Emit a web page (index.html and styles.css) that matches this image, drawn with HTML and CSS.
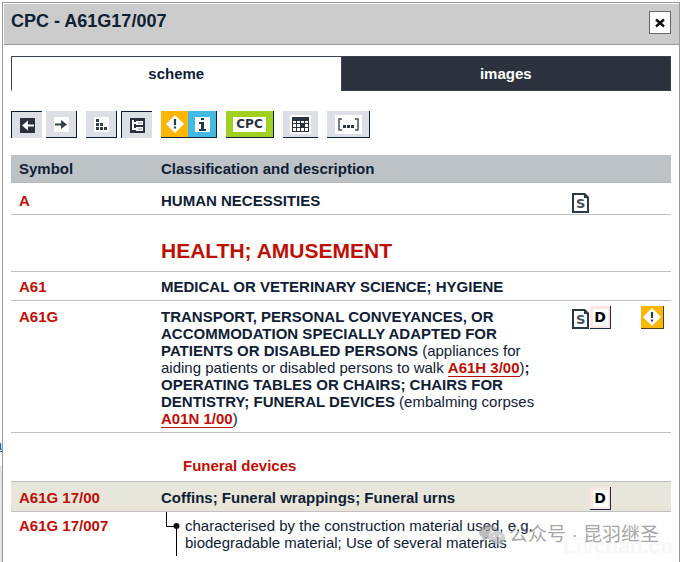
FILE: index.html
```html
<!DOCTYPE html>
<html lang="en">
<head>
    <meta charset="utf-8">
    <title>CPC - A61G17/007</title>
    <link rel="stylesheet" href="styles.css">
</head>
<body>
    <div class="behind"><a href="#">a</a></div>
    <div class="dialog">
        <div class="dialog-header">
            <h1>CPC - A61G17/007</h1>
            <button class="close" aria-label="Close">
                <svg width="10" height="10" viewBox="0 0 10 10"><path d="M1 1.500L9 8.500M9 1.500L1 8.500" stroke="#111" stroke-width="2.400"/></svg>
            </button>
        </div>
        <div class="dialog-body">
            <div class="tabs">
                <button class="tab active">scheme</button>
                <button class="tab">images</button>
            </div>

            <div class="toolbar">
                <div class="group">
                    <button class="tool pressed" aria-label="Back">
                        <svg width="15" height="15" viewBox="0 0 15 15"><rect width="15" height="15" fill="#2b323d"/><path d="M2 7.500L8 2.500V6.500H14V8.500H8V12.500Z" fill="#fff"/></svg>
                    </button>
                    <button class="tool" aria-label="Forward">
                        <svg width="15" height="15" viewBox="0 0 15 15"><rect width="15" height="15" fill="#fff"/><path d="M1 7.500H9" stroke="#2f4043" stroke-width="2"/><path d="M7 3L13 7.500L7 12Z" fill="#2f4043"/></svg>
                    </button>
                </div>
                <div class="group">
                    <button class="tool" aria-label="List">
                        <svg width="15" height="15" viewBox="0 0 15 15"><rect width="15" height="15" fill="#fff"/><path d="M2 2h3v3h-3zM2 6h3v3h-3zM6 6h3v3h-3zM2 10h3v3h-3zM6 10h3v3h-3zM10 10h3v3h-3z" fill="#333b44"/></svg>
                    </button>
                    <button class="tool pressed" aria-label="Tree">
                        <svg width="15" height="15" viewBox="0 0 15 15"><rect width="15" height="15" fill="#2b323d"/><path d="M3 2V11H7M3 5H7" fill="none" stroke="#fff" stroke-width="2"/><path d="M6 3h7v4h-7zM6 9h7v4h-7z" fill="#fff"/><path d="M8 5h4M8 11h4" stroke="#8b9098" stroke-width="1"/></svg>
                    </button>
                </div>
                <div class="group joined">
                    <button class="tool warning" aria-label="Warnings">
                        <svg width="18" height="18" viewBox="0 0 18 18"><path d="M9 0L18 9L9 18L0 9Z" fill="#fff"/><path d="M9 4v6M9 11.500v2" stroke="#2f3e46" stroke-width="2.200"/></svg>
                    </button>
                    <button class="tool info" aria-label="Notes">
                        <svg width="15" height="15" viewBox="0 0 15 15"><rect width="15" height="15" fill="#fff"/><path d="M6 1h3v2h-3zM4 5h5v7h2v2h-7v-2h2v-5h-2z" fill="#263746"/></svg>
                    </button>
                </div>
                <button class="tool cpc"><span>CPC</span></button>
                <button class="tool grid" aria-label="Table">
                    <svg width="21" height="19" viewBox="0 0 21 19"><rect width="21" height="19" fill="#fff"/><path d="M2 2h17v15h-17z" fill="#29323d"/><path d="M3 6h3v2h-3zM7 6h3v2h-3zM11 6h3v2h-3zM15 6h3v2h-3zM3 9h3v3h-3zM7 9h3v3h-3zM15 9h3v3h-3zM3 13h3v3h-3zM7 13h3v3h-3zM11 13h3v3h-3zM15 13h3v3h-3z" fill="#fff"/></svg>
                </button>
                <button class="tool refs" aria-label="References">
                    <svg width="27" height="19" viewBox="0 0 27 19"><rect width="27" height="19" fill="#fff"/><path d="M7 4H4V15H7M20 4H23V15H20" fill="none" stroke="#47505a" stroke-width="1.500"/><path d="M8 10h3v3h-3zM12 10h3v3h-3zM16 10h3v3h-3z" fill="#29323d"/></svg>
                </button>
            </div>

            <table class="scheme">
                <thead>
                    <tr>
                        <th class="symbol">Symbol</th>
                        <th>Classification and description</th>
                        <th class="docs"></th>
                        <th class="notes"></th>
                    </tr>
                </thead>
                <tbody>
                    <tr>
                        <td><a href="#">A</a></td>
                        <td class="title">HUMAN NECESSITIES</td>
                        <td><span class="icons">
                            <svg width="18" height="20" viewBox="0 0 18 20"><path d="M1 1H12L16 5V19H1Z" fill="#fff" stroke="#2b3a42" stroke-width="2"/><path d="M12 0H13L17 4V5H12Z" fill="#2b3a42"/><text x="4" y="15" class="glyph-s">S</text></svg>
                        </span></td>
                        <td></td>
                    </tr>
                    <tr class="section">
                        <td></td>
                        <td colspan="3">HEALTH; AMUSEMENT</td>
                    </tr>
                    <tr class="short">
                        <td><a href="#">A61</a></td>
                        <td class="title" colspan="3">MEDICAL OR VETERINARY SCIENCE; HYGIENE</td>
                    </tr>
                    <tr class="tall">
                        <td><a href="#">A61G</a></td>
                        <td><b>TRANSPORT, PERSONAL CONVEYANCES, OR ACCOMMODATION SPECIALLY ADAPTED FOR PATIENTS OR DISABLED PERSONS</b> (appliances for aiding patients or disabled persons to walk <a class="ref" href="#">A61H 3/00</a>)<b>; OPERATING TABLES OR CHAIRS; CHAIRS FOR DENTISTRY; FUNERAL DEVICES</b> (embalming corpses <a class="ref" href="#">A01N 1/00</a>)</td>
                        <td><span class="icons">
                            <svg width="18" height="20" viewBox="0 0 18 20"><path d="M1 1H12L16 5V19H1Z" fill="#fff" stroke="#2b3a42" stroke-width="2"/><path d="M12 0H13L17 4V5H12Z" fill="#2b3a42"/><text x="4" y="15" class="glyph-s">S</text></svg>
                            <button class="definition"><span>D</span></button>
                        </span></td>
                        <td>
                            <button class="alert" aria-label="Warning">
                                <svg width="18" height="18" viewBox="0 0 18 18"><path d="M9 0L18 9L9 18L0 9Z" fill="#fff"/><path d="M9 4v6M9 11.500v2" stroke="#2f3e46" stroke-width="2.200"/></svg>
                            </button>
                        </td>
                    </tr>
                    <tr class="heading">
                        <td></td>
                        <td colspan="3">Funeral devices</td>
                    </tr>
                    <tr class="selected">
                        <td><a href="#">A61G 17/00</a></td>
                        <td class="title">Coffins; Funeral wrappings; Funeral urns</td>
                        <td><span class="icons end"><button class="definition"><span>D</span></button></span></td>
                        <td></td>
                    </tr>
                    <tr class="leaf">
                        <td><a href="#">A61G 17/007</a></td>
                        <td>
                            <div class="branch">
                                <svg width="19" height="44" viewBox="0 0 19 44"><path d="M5.500 0V14.500H15M15.500 14V44" fill="none" stroke="#000"/><circle cx="15.500" cy="14" r="3" fill="#111"/></svg>
                                <p>characterised by the construction material used, e.g. biodegradable material; Use of several materials</p>
                            </div>
                        </td>
                        <td></td>
                        <td></td>
                    </tr>
                </tbody>
            </table>
        </div>
    </div>

    <div class="site-mark">Livchan.cn</div>
    <div class="account-mark">
        <svg width="26" height="22" viewBox="0 0 26 22"><path d="M9 1C4 1 0 4 0 8C0 10.500 1.500 12.500 4 14L3 17L7 15H10C9 9 13 6 18 6C17 3 13 1 9 1Z" fill="#999"/><path d="M18 7C13 7 10 10 10 13.500C10 17 13 20 18 20H20L24 22L23 19C25 17.500 26 15.500 26 13.500C26 10 23 7 18 7Z" fill="#b5b5b5"/><g fill="#fff"><circle cx="6" cy="6" r="1"/><circle cx="12" cy="6" r="1"/><circle cx="15" cy="12" r="1"/><circle cx="21" cy="12" r="1"/></g></svg>
        <span>公众号 · 昆羽继圣</span>
    </div>
</body>
</html>
```
FILE: styles.css
```css
* {
    box-sizing: border-box;
}

body {
    margin: 0;
    height: 100vh;
    overflow: hidden;
    position: relative;
    font-family: "Liberation Sans", Arial, "Noto Sans CJK SC", sans-serif;
    font-size: 15px;
    line-height: 17px;
    color: #0f2034;
    background: #fff;
}

button {
    font: inherit;
    color: inherit;
    padding: 0;
    margin: 0;
    border: none;
    border-radius: 0;
    cursor: pointer;
}

svg {
    display: block;
    flex: none;
}

/* strip of the page that shows beside the dialog */
.behind {
    position: absolute;
    left: 0;
    top: 0;
    bottom: 0;
    width: 2px;
    overflow: hidden;
    padding-top: 436px;
    display: flex;
    justify-content: flex-end;
    align-items: flex-start;
    background: linear-gradient(#fff 466px, #e4e4e4 466px);
}

.behind a {
    color: #0a4fa8;
    text-decoration: underline;
}

.dialog {
    margin: 2px 0 0 2px;
    min-height: 100vh;
    padding: 1px 0 0 1px;
    border: 1px solid #999;
    background: #fff;
}

.dialog-header {
    display: flex;
    justify-content: space-between;
    align-items: flex-start;
    height: 41px;
    padding: 7px 8px 0 7px;
    background: #ccc;
    border-bottom: 1px solid #999;
}

.dialog-header h1 {
    margin: 0;
    font-size: 18px;
    line-height: 20px;
}

.close {
    display: flex;
    align-items: center;
    justify-content: center;
    width: 22px;
    height: 23px;
    background: #fff;
    border: 1px solid #666;
}

.dialog-body {
    padding: 11px 8px 0 7px;
}

.tabs {
    display: flex;
    height: 35px;
    margin-bottom: 20px;
}

.tab {
    flex: 1;
    font-weight: bold;
    color: #fff;
    background: #2b323e;
    border: 1px solid #3a424d;
}

.tab.active {
    color: #0f2034;
    background: #fff;
    border-bottom-color: #fff;
    border-right: none;
}

.toolbar {
    display: flex;
    gap: 9px;
    height: 27px;
    margin-bottom: 17px;
}

.group {
    display: flex;
    gap: 4px;
}

.joined {
    gap: 0;
}

.tool {
    display: flex;
    align-items: center;
    justify-content: center;
    width: 31px;
    background: #dce0e6;
    border-right: 1px solid #0f2034;
    border-bottom: 1px solid #0f2034;
}

.tool.pressed {
    border: none;
    border-left: 1px solid #0f2034;
    border-top: 1px solid #0f2034;
}

.tool.warning {
    width: 27px;
    background: #ffb600;
    border-right: none;
}

.tool.info {
    width: 29px;
    background: #43bae3;
}

.tool.cpc {
    width: 48px;
    background: #9fd022;
}

.cpc span {
    width: 33px;
    background: #fff;
    font-family: "DejaVu Sans", sans-serif;
    font-size: 12px;
    font-weight: bold;
    line-height: 15px;
    color: #29323d;
}

.tool.grid {
    width: 35px;
    border-right: none;
}

.tool.refs {
    width: 43px;
}

.scheme {
    width: 100%;
    table-layout: fixed;
    border-collapse: separate;
    border-spacing: 0;
}

.symbol {
    width: 142px;
}

.docs {
    width: 69px;
}

.notes {
    width: 37px;
}

.scheme th {
    height: 28px;
    padding: 0 8px;
    text-align: left;
    background: #bdc2c6;
    border-bottom: 1px solid #b3b9bd;
}

.scheme td {
    height: 32px;
    padding: 9px 8px 0;
    vertical-align: top;
    border-bottom: 1px solid #c0c0c0;
}

.scheme td:nth-child(n+3) {
    padding-top: 10px;
    padding-left: 7px;
    padding-right: 0;
}

.scheme a {
    color: #be0f05;
    font-weight: bold;
    text-decoration: none;
}

.scheme a.ref {
    border-bottom: 1px solid #be0f05;
}

.title {
    font-weight: bold;
}

.scheme .section td {
    height: 57px;
    padding-top: 24px;
    font-size: 21px;
    font-weight: bold;
    line-height: 24px;
    color: #be0f05;
}

.scheme .short td {
    height: 29px;
    padding-top: 6px;
}

.scheme .tall td {
    padding-top: 7px;
    padding-bottom: 5px;
}

.scheme .tall td:nth-child(n+3) {
    padding-top: 5px;
}

.scheme .heading td {
    height: 49px;
    padding: 24px 8px 0 30px;
    font-weight: bold;
    color: #be0f05;
}

.scheme .selected td {
    height: 30px;
    padding-top: 7px;
    background: #e8e6da;
}

.scheme .selected td:nth-child(3) {
    padding-top: 5px;
}

.scheme .leaf td {
    padding-top: 5px;
    border-bottom: none;
}

.scheme .leaf td:nth-child(2) {
    padding-top: 0;
    padding-right: 0;
}

.branch {
    display: flex;
    gap: 5px;
}

.branch p {
    margin: 5px 0 0;
}

.icons {
    display: flex;
    align-items: flex-start;
}

.icons.end {
    padding-left: 18px;
}

.tall .icons svg {
    margin-top: 3px;
}

.definition {
    display: flex;
    align-items: center;
    justify-content: center;
    width: 21px;
    height: 23px;
    background: #ffe6e4;
    border-right: 1px solid #1c2940;
    border-bottom: 1px solid #1c2940;
}

.definition span {
    width: 15px;
    background: #fff;
    font-family: "DejaVu Sans", sans-serif;
    font-size: 14px;
    font-weight: bold;
    line-height: 17px;
    color: #000;
}

.glyph-s {
    font-family: "DejaVu Sans", sans-serif;
    font-size: 13px;
    font-weight: bold;
    fill: #47505a;
}

.alert {
    display: flex;
    align-items: center;
    justify-content: center;
    width: 23px;
    height: 23px;
    background: #ffb600;
    border-right: 1px solid #4a3f20;
    border-bottom: 1px solid #4a3f20;
}

/* watermarks over the lower right corner */
.account-mark {
    position: absolute;
    right: 21px;
    bottom: 14px;
    display: flex;
    align-items: center;
    gap: 4px;
    font-family: "Liberation Sans", "Noto Sans CJK SC", sans-serif;
    font-size: 19px;
    line-height: 26px;
    color: #777;
    opacity: 0.65;
}

.site-mark {
    position: absolute;
    right: 7px;
    bottom: 4px;
    font-size: 21px;
    font-weight: bold;
    line-height: 24px;
    color: #f8f6f6;
}
```
